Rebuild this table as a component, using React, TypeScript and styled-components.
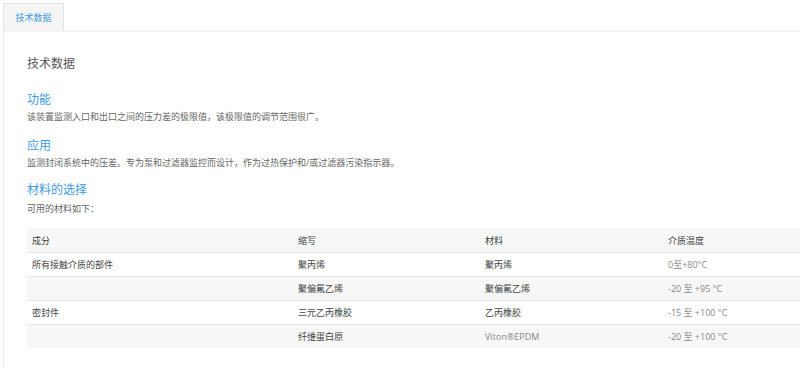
import styled, { createGlobalStyle } from "styled-components";

const Global = createGlobalStyle`
  html, body { margin: 0; padding: 0; background: #fff; overflow: hidden; }
  body { font-family: "Open Sans", "Noto Sans CJK SC", sans-serif; }
`;

const Page = styled.div`
  width: 800px;
  height: 368px;
  padding: 3px 0 0 3px;
  box-sizing: border-box;
  overflow: hidden;
`;

const Tabs = styled.div`
  display: flex;
`;

const Tab = styled.div`
  width: 61px;
  height: 27px;
  box-sizing: border-box;
  border: 1px solid #e3e3e3;
  border-bottom: none;
  background: #f5f5f5;
  color: #3d9be9;
  font-size: 9px;
  display: flex;
  align-items: center;
  justify-content: center;
`;

const Panel = styled.div`
  width: 900px;
  height: 340px;
  border-top: 2px solid #f5f5f5;
  border-left: 1px solid #ececec;
  padding: 23px 0 0 23px;
  box-sizing: border-box;
`;

const Title = styled.h2`
  margin: 0 0 19px;
  font-size: 12px;
  font-weight: 400;
  color: #555;
  line-height: 17px;
`;

const Heading = styled.h3<{ $gap?: number }>`
  margin: 0 0 ${(p) => p.$gap ?? 0}px;
  font-size: 12px;
  font-weight: 400;
  color: #3d9be9;
  line-height: 18px;
`;

const Text = styled.p<{ $gap?: number }>`
  margin: 0 0 ${(p) => p.$gap ?? 12}px;
  font-size: 9px;
  color: #666;
  line-height: 16px;
`;

const Table = styled.div`
  width: 773px;
  font-size: 9px;
`;

const Row = styled.div<{ $shade?: boolean; $head?: boolean }>`
  display: grid;
  grid-template-columns: 266px 187px 183px 1fr;
  height: ${(p) => (p.$head ? 24 : 23)}px;
  align-items: center;
  background: ${(p) => (p.$shade ? "#f7f7f7" : "#fff")};
  border-top: ${(p) => (p.$head ? "none" : "1px solid #e6e6e6")};
`;

const Cell = styled.div<{ $muted?: boolean }>`
  padding-left: 5px;
  color: ${(p) => (p.$muted ? "#888" : "#444")};
  white-space: nowrap;
`;

const rows = [
  ["所有接触介质的部件", "聚丙烯", "聚丙烯", "0至+80°C"],
  ["", "聚偏氟乙烯", "聚偏氟乙烯", "-20 至 +95 °C"],
  ["密封件", "三元乙丙橡胶", "乙丙橡胶", "-15 至 +100 °C"],
  ["", "纤维蛋白原", "Viton®EPDM", "-20 至 +100 °C"],
];

export default function App() {
  return (
    <Page>
      <Global />
      <Tabs>
        <Tab>技术数据</Tab>
      </Tabs>
      <Panel>
        <Title>技术数据</Title>
        <Heading>功能</Heading>
        <Text>该装置监测入口和出口之间的压力差的极限值，该极限值的调节范围很广。</Text>
        <Heading>应用</Heading>
        <Text $gap={10}>监测封闭系统中的压差。专为泵和过滤器监控而设计，作为过热保护和/或过滤器污染指示器。</Text>
        <Heading $gap={2}>材料的选择</Heading>
        <Text $gap={11}>可用的材料如下：</Text>
        <Table>
          <Row $head $shade>
            <Cell>成分</Cell>
            <Cell>缩写</Cell>
            <Cell>材料</Cell>
            <Cell>介质温度</Cell>
          </Row>
          {rows.map((r, i) => (
            <Row key={i} $shade={i % 2 === 1}>
              <Cell>{r[0]}</Cell>
              <Cell>{r[1]}</Cell>
              <Cell $muted={r[2].startsWith("Viton")}>{r[2]}</Cell>
              <Cell $muted>{r[3]}</Cell>
            </Row>
          ))}
        </Table>
      </Panel>
    </Page>
  );
}
